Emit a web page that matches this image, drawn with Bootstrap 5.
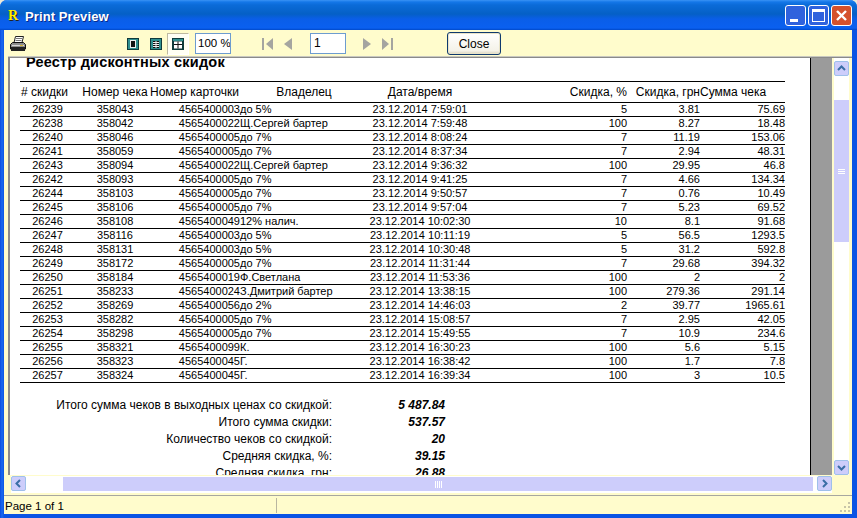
<!DOCTYPE html>
<html lang="en">
<head>
  <meta charset="UTF-8">
  <title>Print Preview</title>
  <meta name="viewport" content="width=device-width, initial-scale=1" />
  <link href="https://cdn.jsdelivr.net/npm/bootstrap@5.3.0/dist/css/bootstrap.min.css" rel="stylesheet">
  <style>
    html, body { height: 100%; overflow: hidden; }
    body { background: #ece9d8; font: 11px/1.2 "Liberation Sans", Arial, sans-serif; color: #000; }
    .xp-window { height: 518px; background: linear-gradient(90deg, #0a4be0 0, #1a6af0 2px, #0a54e4 4px); border-radius: 7px 7px 0 0; padding: 0 5px 4px 4px; }
    .xp-title { height: 30px; margin: 0 -5px 0 -4px; padding: 0 5px 0 8px; border-radius: 7px 7px 0 0;
      background: linear-gradient(180deg, #3a93f5 0, #1477e8 2px, #0b6bd8 5px, #0560c6 14px, #0a5ee8 19px, #0a60f0 28px, #0048c8 30px); }
    .xp-logo { width: 16px; font: bold 14px/16px "Liberation Serif", serif; color: #ffee00; text-shadow: 1px 1px 0 #222; margin-top: 1px; }
    .xp-caption { font: bold 13px "Liberation Sans", sans-serif; color: #fff; text-shadow: 1px 1px 0 #0a2a8a; margin: 3px 0 0 1px; letter-spacing: .1px; }
    .xp-ctl { width: 21px; height: 21px; border: 1px solid #fff; border-radius: 3px; margin-left: 2px; background: #2f62dd; }
    .xp-ctl svg { display: block; }
    .xp-ctl-close { background: #d5512c; }
    .xp-body { flex: 1 1 auto; min-height: 0; background: #fffccc; position: relative; }
    .xp-bar { height: 27px; flex: none; }
    .bar-icon { display: block; flex: none; }
    .ml-print { margin-left: 6px; }
    .ml-page1 { margin-left: 101px; }
    .ml-page2 { margin-left: 11px; }
    .toggle-on { width: 22px; height: 22px; margin-left: 5px; background: #fffff4; border: 1px solid #bdb9a0; border-right-color: #fff; border-bottom-color: #fff; }
    .xp-field { height: 21px; background: #fff; border: 1px solid #6d9ccf; font-size: 12px; line-height: 18px; padding-left: 3px; white-space: nowrap; overflow: hidden; }
    .field-zoom { width: 36px; margin-left: 6px; padding-left: 2px; font-size: 11.5px; }
    .field-page { width: 36px; margin-left: 18px; }
    .nav-first { margin-left: 31px; }
    .nav-prev { margin-left: 11px; }
    .nav-next { margin-left: 17px; }
    .nav-last { margin-left: 11px; }
    .xp-close { width: 54px; height: 23px; margin-left: 54px; padding: 0; font-size: 12px; color: #000; background: linear-gradient(180deg, #fff, #f4f2e8 85%, #d8d2bd); border: 1px solid #0f3a6e; border-radius: 3px; box-shadow: inset 0 0 0 1px #e9e4c8; }
    .xp-pane { flex: 1 1 auto; min-height: 0; margin-left: 4px; border-top: 1px solid #8a8a8a; box-shadow: 0 -1px 0 #c8c8c0;
      display: grid; grid-template-columns: 824px 1fr; grid-template-rows: 417px 1fr; }
    .xp-view { overflow: hidden; background: #9b9b9b; border-left: 2px solid #8a8a8a; }
    .xp-sheet { width: 800px; height: 100%; background: #fff; border-right: 1px solid #000; box-sizing: content-box; overflow: hidden; }
    .sheet-title { font-weight: bold; font-size: 14.5px; line-height: 16px; margin: -4px 0 0 16px; height: 20px; letter-spacing: .2px; }
    .doc-table { width: 765px; margin: 7px 0 0 10px; table-layout: fixed; border-collapse: collapse; }
    .doc-table th { font-weight: normal; font-size: 12px; height: 21px; padding: 0; border-top: 1px solid #000; border-bottom: 1px solid #000; vertical-align: middle; white-space: nowrap; overflow: visible; }
    .doc-table td { height: 14px; padding: 0; border-bottom: 1px solid #000; line-height: 13px; vertical-align: bottom; white-space: nowrap; overflow: visible; }
    .th-card { display: inline-block; margin-left: -5px; }
    .th-owner { padding-left: 3px !important; }
    .sum-rows { margin-top: 14px; }
    .sum-row { height: 17px; line-height: 17px; font-size: 12px; }
    .sum-label { width: 322px; text-align: right; flex: none; white-space: nowrap; }
    .sum-val { width: 113px; text-align: right; flex: none; font-weight: bold; font-style: italic; font-size: 12px; }
    .vscroll { grid-column: 2; grid-row: 1; width: 15px; margin-left: 2px; background: #fff; padding-top: 3px; }
    .hscroll { grid-column: 1; grid-row: 2; height: 17px; margin: 1px 0 0 3px; background: #fff; }
    .sb-btn { width: 15px; height: 15px; flex: none; background: #cdcdfb; border: 1px solid #9fc0ea; border-radius: 2px; }
    .sb-btn svg { display: block; }
    .thumb-v { width: 15px; height: 142px; margin-top: 24px; background: #cdcdfb; }
    .thumb-h { width: 750px; height: 14px; margin: 1px 4px 0 37px; background: #cdcdfb; }
    .grip-v { width: 7px; height: 5px; background: repeating-linear-gradient(180deg, #fff 0 1px, transparent 1px 2px); }
    .grip-h { width: 7px; height: 7px; background: repeating-linear-gradient(90deg, #fff 0 1px, transparent 1px 2px); }
    .xp-status { height: 19px; flex: none; border-top: 1px solid #a7a7a0; padding-left: 1px; font-size: 11.5px; line-height: 18px; }
    .status-cell { width: 272px; border-right: 1px solid #b9b6a0; height: 15px; line-height: 17px; }
    .size-grip { position: absolute; right: 1px; bottom: 1px; display: block; }
  </style>
</head>
<body>
  <div class="xp-window d-flex flex-column">
    <!-- title bar -->
    <div class="xp-title d-flex align-items-center flex-none">
      <span class="xp-logo">R</span>
      <span class="xp-caption">Print Preview</span>
      <div class="ms-auto d-flex">
        <div class="xp-ctl"><svg width="19" height="19"><path d="M8 2a8 8 0 0 0-5 10 8 8 0 0 1 5-10z" fill="#7fa5f0"/><rect x="4" y="13" width="8" height="3" fill="#fff"/></svg></div>
        <div class="xp-ctl"><svg width="19" height="19"><rect x="3.500" y="3.500" width="12" height="12" fill="none" stroke="#fff"/><rect x="3" y="3" width="13" height="3" fill="#fff"/></svg></div>
        <div class="xp-ctl xp-ctl-close"><svg width="19" height="19"><path d="M5 5l9 9M14 5l-9 9" stroke="#fff" stroke-width="2.400"/></svg></div>
      </div>
    </div>

    <div class="xp-body d-flex flex-column">
      <!-- toolbar -->
      <div class="xp-bar d-flex align-items-center">
        <svg class="bar-icon ml-print" width="16" height="16" viewBox="0 0 16 16">
          <path d="M5.500 .5h8l-1.500 6h-8z" fill="#fff" stroke="#222"/>
          <path d="M6 2.500h6M5.500 4.500h6" stroke="#777"/>
          <path d="M2.500 6.500h11l2 2v4.500H.5V8.500z" fill="#8d8d8d" stroke="#111"/>
          <rect x="1" y="11" width="14" height="4" fill="#222"/>
          <rect x="2" y="9" width="12" height="1" fill="#d8d8d8"/>
          <rect x="10" y="9" width="3" height="1" fill="#d8b830"/>
        </svg>
        <svg class="bar-icon ml-page1" width="12" height="12" viewBox="0 0 12 12"><rect width="12" height="12" fill="#0f3b3b"/><rect x="1" y="1" width="10" height="10" fill="#2f8f8f"/><rect x="3.500" y="2.500" width="5" height="7" fill="#111" stroke="#eee"/></svg>
        <svg class="bar-icon ml-page2" width="12" height="12" viewBox="0 0 12 12"><rect width="12" height="12" fill="#0f3b3b"/><rect x="1" y="1" width="10" height="10" fill="#2f8f8f"/><path d="M3 3h6v7H3z" fill="#111"/><path d="M3 4.500h6M3 6.500h6M3 8.500h6M6 3v7" stroke="#eee" stroke-width="1"/></svg>
        <div class="toggle-on d-flex align-items-center justify-content-center">
          <svg width="12" height="12" viewBox="0 0 12 12"><rect width="12" height="12" fill="#0f3b3b"/><rect x="1" y="1" width="10" height="2" fill="#2f8f8f"/><path d="M2 3.500h8v7H2z" fill="#fff"/><path d="M2 6.500h8M6 3.500v7" stroke="#111"/></svg>
        </div>
        <div class="xp-field field-zoom">100 %</div>
        <svg class="bar-icon nav-first" width="11" height="12" viewBox="0 0 11 12"><rect width="2" height="12" fill="#a5a5a0"/><path d="M11 0v12L4 6z" fill="#a5a5a0"/></svg>
        <svg class="bar-icon nav-prev" width="8" height="12" viewBox="0 0 8 12"><path d="M8 0v12L0 6z" fill="#a5a5a0"/></svg>
        <div class="xp-field field-page">1</div>
        <svg class="bar-icon nav-next" width="8" height="12" viewBox="0 0 8 12"><path d="M0 0v12l8-6z" fill="#a5a5a0"/></svg>
        <svg class="bar-icon nav-last" width="11" height="12" viewBox="0 0 11 12"><path d="M0 0v12l7-6z" fill="#a5a5a0"/><rect x="9" width="2" height="12" fill="#a5a5a0"/></svg>
        <button type="button" class="btn xp-close">Close</button>
      </div>

      <!-- preview pane -->
      <div class="xp-pane">
        <div class="xp-view">
          <div class="xp-sheet">
            <div class="sheet-title">Реестр дисконтных скидок</div>
            <table class="doc-table">
              <colgroup>
                <col style="width:55px"><col style="width:80px"><col style="width:85px"><col style="width:125px">
                <col style="width:110px"><col style="width:152px"><col style="width:73px"><col style="width:85px">
              </colgroup>
              <thead>
                <tr>
                  <th class="text-start">&#8202;# скидки</th>
                  <th class="text-center">Номер чека</th>
                  <th class="text-start"><span class="th-card">Номер карточки</span></th>
                  <th class="text-center th-owner">Владелец</th>
                  <th class="text-center">Дата/время</th>
                  <th class="text-end">Скидка, %</th>
                  <th class="text-end">Скидка, грн</th>
                  <th class="text-start">Сумма чека</th>
                </tr>
              </thead>
              <tbody id="discountRows"></tbody>
            </table>
            <div class="sum-rows" id="sumRows"></div>
          </div>
        </div>
        <div class="vscroll d-flex flex-column">
          <div class="sb-btn"><svg width="13" height="13"><path d="M3 8l3.500-3.500L10 8" fill="none" stroke="#3a6ea5" stroke-width="2"/></svg></div>
          <div class="thumb-v d-flex align-items-center justify-content-center"><div class="grip-v"></div></div>
          <div class="sb-btn mt-auto"><svg width="13" height="13"><path d="M3 5l3.500 3.500L10 5" fill="none" stroke="#3a6ea5" stroke-width="2"/></svg></div>
        </div>
        <div class="hscroll d-flex">
          <div class="sb-btn"><svg width="13" height="13"><path d="M8 3L4.500 6.500 8 10" fill="none" stroke="#3a6ea5" stroke-width="2"/></svg></div>
          <div class="thumb-h d-flex align-items-center justify-content-center"><div class="grip-h"></div></div>
          <div class="sb-btn"><svg width="13" height="13"><path d="M5 3l3.500 3.500L5 10" fill="none" stroke="#3a6ea5" stroke-width="2"/></svg></div>
        </div>
      </div>

      <!-- status bar -->
      <div class="xp-status d-flex align-items-center">
        <div class="status-cell">Page 1 of 1</div>
      </div>
      <svg class="size-grip" width="11" height="11" viewBox="0 0 11 11" fill="#c8c5a8">
        <rect x="8" y="0" width="2" height="2"/><rect x="4" y="4" width="2" height="2"/><rect x="8" y="4" width="2" height="2"/>
        <rect x="0" y="8" width="2" height="2"/><rect x="4" y="8" width="2" height="2"/><rect x="8" y="8" width="2" height="2"/>
      </svg>
    </div>
  </div>

  <script src="https://cdn.jsdelivr.net/npm/bootstrap@5.3.0/dist/js/bootstrap.bundle.min.js"></script>
  <script>
    const rows = [
      [26239, 358043, '4565400003', 'до 5%', '7:59:01', 5, '3.81', '75.69'],
      [26238, 358042, '4565400022', 'Щ.Сергей бартер', '7:59:48', 100, '8.27', '18.48'],
      [26240, 358046, '4565400005', 'до 7%', '8:08:24', 7, '11.19', '153.06'],
      [26241, 358059, '4565400005', 'до 7%', '8:37:34', 7, '2.94', '48.31'],
      [26243, 358094, '4565400022', 'Щ.Сергей бартер', '9:36:32', 100, '29.95', '46.8'],
      [26242, 358093, '4565400005', 'до 7%', '9:41:25', 7, '4.66', '134.34'],
      [26244, 358103, '4565400005', 'до 7%', '9:50:57', 7, '0.76', '10.49'],
      [26245, 358106, '4565400005', 'до 7%', '9:57:04', 7, '5.23', '69.52'],
      [26246, 358108, '4565400049', '12% налич.', '10:02:30', 10, '8.1', '91.68'],
      [26247, 358116, '4565400003', 'до 5%', '10:11:19', 5, '56.5', '1293.5'],
      [26248, 358131, '4565400003', 'до 5%', '10:30:48', 5, '31.2', '592.8'],
      [26249, 358172, '4565400005', 'до 7%', '11:31:44', 7, '29.68', '394.32'],
      [26250, 358184, '4565400019', 'Ф.Светлана', '11:53:36', 100, '2', '2'],
      [26251, 358233, '4565400024', 'З.Дмитрий бартер', '13:38:15', 100, '279.36', '291.14'],
      [26252, 358269, '4565400056', 'до 2%', '14:46:03', 2, '39.77', '1965.61'],
      [26253, 358282, '4565400005', 'до 7%', '15:08:57', 7, '2.95', '42.05'],
      [26254, 358298, '4565400005', 'до 7%', '15:49:55', 7, '10.9', '234.6'],
      [26255, 358321, '4565400099', 'К.', '16:30:23', 100, '5.6', '5.15'],
      [26256, 358323, '4565400045', 'Г.', '16:38:42', 100, '1.7', '7.8'],
      [26257, 358324, '4565400045', 'Г.', '16:39:34', 100, '3', '10.5']
    ];
    const totals = [
      ['Итого сумма чеков в выходных ценах со скидкой:', '5 487.84'],
      ['Итого сумма скидки:', '537.57'],
      ['Количество чеков со скидкой:', '20'],
      ['Средняя скидка, %:', '39.15'],
      ['Средняя скидка, грн:', '26.88']
    ];

    document.getElementById('discountRows').innerHTML = rows.map(r => `
      <tr>
        <td class="text-center">${r[0]}</td>
        <td class="text-center">${r[1]}</td>
        <td class="text-end">${r[2]}</td>
        <td>${r[3]}</td>
        <td class="text-center">23.12.2014 ${r[4]}</td>
        <td class="text-end">${r[5]}</td>
        <td class="text-end">${r[6]}</td>
        <td class="text-end">${r[7]}</td>
      </tr>`).join('');

    document.getElementById('sumRows').innerHTML = totals.map(t => `
      <div class="sum-row d-flex">
        <div class="sum-label">${t[0]}</div>
        <div class="sum-val">${t[1]}</div>
      </div>`).join('');
  </script>
</body>
</html>
